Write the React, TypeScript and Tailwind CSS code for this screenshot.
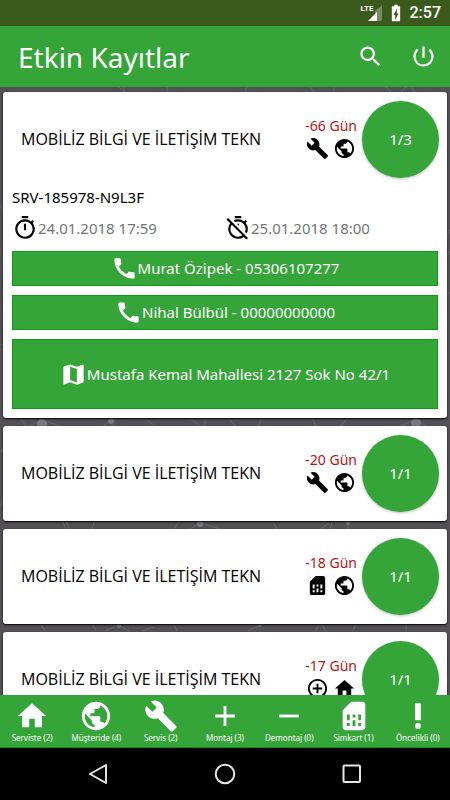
import React from 'react';
import type { IconType } from 'react-icons';
import {
  MdAdd,
  MdAddCircleOutline,
  MdBatteryChargingFull,
  MdBuild,
  MdCall,
  MdHome,
  MdMap,
  MdOutlineTimer,
  MdOutlineTimerOff,
  MdPowerSettingsNew,
  MdPriorityHigh,
  MdPublic,
  MdRemove,
  MdSearch,
  MdSimCard,
} from 'react-icons/md';

interface ServiceRecord {
  id: number;
  customer: string;
  days: string;
  count: string;
  icons: IconType[];
  details?: {
    code: string;
    start: string;
    end: string;
    contacts: { name: string; phone: string }[];
    address: string;
  };
}

const records: ServiceRecord[] = [
  {
    id: 1,
    customer: 'MOBİLİZ BİLGİ VE İLETİŞİM TEKN',
    days: '-66 Gün',
    count: '1/3',
    icons: [MdBuild, MdPublic],
    details: {
      code: 'SRV-185978-N9L3F',
      start: '24.01.2018 17:59',
      end: '25.01.2018 18:00',
      contacts: [
        { name: 'Murat Özipek', phone: '05306107277' },
        { name: 'Nihal Bülbül', phone: '00000000000' },
      ],
      address: 'Mustafa Kemal Mahallesi 2127 Sok No 42/1',
    },
  },
  { id: 2, customer: 'MOBİLİZ BİLGİ VE İLETİŞİM TEKN', days: '-20 Gün', count: '1/1', icons: [MdBuild, MdPublic] },
  { id: 3, customer: 'MOBİLİZ BİLGİ VE İLETİŞİM TEKN', days: '-18 Gün', count: '1/1', icons: [MdSimCard, MdPublic] },
  { id: 4, customer: 'MOBİLİZ BİLGİ VE İLETİŞİM TEKN', days: '-17 Gün', count: '1/1', icons: [MdAddCircleOutline, MdHome] },
];

const tabs: { label: string; icon: IconType }[] = [
  { label: 'Serviste (2)', icon: MdHome },
  { label: 'Müşteride (4)', icon: MdPublic },
  { label: 'Servis (2)', icon: MdBuild },
  { label: 'Montaj (3)', icon: MdAdd },
  { label: 'Demontaj (0)', icon: MdRemove },
  { label: 'Simkart (1)', icon: MdSimCard },
  { label: 'Öncelikli (0)', icon: MdPriorityHigh },
];

function StatusBar() {
  return (
    <div className="flex h-[26px] shrink-0 items-center justify-end bg-[#3a5a1c] pr-[9px] text-white">
      <div className="flex items-start">
        <span className="font-[Roboto,sans-serif] text-[8px] leading-2 font-bold">LTE</span>
        <svg className="-ml-2 h-4 w-4" viewBox="0 0 16 16" aria-hidden="true">
          <path d="M16 0v16H2l7-7V6z" fill="#fff" fillOpacity=".3" />
          <path d="M11 7v9H2z" fill="#fff" />
        </svg>
      </div>
      <MdBatteryChargingFull className="ml-1 h-5 w-5" />
      <span className="ml-1 font-[Roboto,sans-serif] text-[16px] leading-5 font-medium">2:57</span>
    </div>
  );
}

function Header() {
  return (
    <header className="flex h-[61px] shrink-0 items-center bg-[#36a539] pr-[13px] pl-[18px] text-white">
      <h1 className="flex-1 text-[28px] leading-9">Etkin Kayıtlar</h1>
      <button type="button" aria-label="Ara" className="mr-[26px]">
        <MdSearch className="h-[27px] w-[27px]" />
      </button>
      <button type="button" aria-label="Çıkış">
        <MdPowerSettingsNew className="h-[27px] w-[27px]" />
      </button>
    </header>
  );
}

// Faint network pattern behind the list
function Backdrop() {
  return (
    <svg
      className="absolute inset-0 h-full w-full"
      viewBox="0 0 450 608"
      preserveAspectRatio="none"
      fill="none"
      stroke="#69676c"
      strokeWidth="1"
      aria-hidden="true"
    >
      <path d="M118 0l6 4M124 5V0M167 0v8M244 8l3-8M310 0l4 5M334 0v5M386 0l5 5M400 6l6-6M412 0l3 6" />
      <path d="M0 118l5 7M450 164l-5 8M447 206h3M0 258h4M0 366l4-6M0 418l4-6M447 150l3-8" />
      <path d="M20 331l6 8M30 339l12-6 18 6M104 339l8-7 10-1M117 331l-6 8M145 331l10 8M190 331l10 8M205 331v8M236 339l-8-8M262 331l-4 8M312 331l4 8M340 339l8-8M400 339l14-6 12 6" />
      <path d="M62 433l4 9M66 433l3 9M95 433l-3 9M174 442l5-8M190 442l10-6 20 6M200 436l12-3M272 433l5 9M320 442l10-6M330 442l3-9M348 434v8" />
      <path d="M40 536l5 8M92 536l4 8M105 544l14-6 10 6M142 544l12-4M173 536l4 8M248 544l12-6M316 544l3-8M322 536l3 8M353 544l3-8M406 536v8" />
      <g fill="#7b797d" stroke="none">
        <circle cx="42" cy="337" r="5" />
        <circle cx="111" cy="334" r="3" />
        <circle cx="416" cy="336" r="5" />
        <circle cx="200" cy="437" r="3" />
        <circle cx="348" cy="436" r="2" />
        <circle cx="119" cy="539" r="2" />
        <circle cx="260" cy="538" r="2" />
      </g>
    </svg>
  );
}

function RecordCard({ record }: { record: ServiceRecord }) {
  const { details } = record;

  return (
    <article className="shrink-0 rounded-[3px] bg-white shadow-[0_1px_2px_#000]">
      <div className="flex h-[95px] items-center pr-2 pb-px pl-[18px]">
        <h2 className="min-w-0 flex-1 font-['Open_Sans',sans-serif] text-[16px] leading-6 whitespace-nowrap text-black">
          {record.customer}
        </h2>
        <div className="mr-[5px] flex flex-col items-center pb-1">
          <span className="text-[14px] leading-[22px] text-[#b81414]">{record.days}</span>
          <div className="flex gap-1 text-black">
            {record.icons.map((Icon, i) => (
              <Icon key={i} className="h-[23px] w-[23px]" />
            ))}
          </div>
        </div>
        <button
          type="button"
          className="h-[77px] w-[77px] rounded-full bg-[#36a539] text-[15px] text-white shadow-[0_1px_3px_#0004]"
        >
          {record.count}
        </button>
      </div>

      {details && (
        <div className="flex flex-col gap-[9px] px-[9px] pb-[9px]">
          <div>
            <p className="text-[15px] leading-5 text-black">{details.code}</p>
            <div className="mt-[7px] grid grid-cols-2 text-[15px] leading-7 text-[#757575]">
              <div className="flex items-center">
                <MdOutlineTimer className="h-[26px] w-[26px] text-black" />
                {details.start}
              </div>
              <div className="flex items-center">
                <MdOutlineTimerOff className="h-[26px] w-[26px] text-black" />
                {details.end}
              </div>
            </div>
          </div>
          {details.contacts.map((contact) => (
            <a
              key={contact.phone}
              href={`tel:${contact.phone}`}
              className="flex h-[35px] items-center justify-center border border-[#0a9d10] bg-[#36a539] text-[15px] text-white"
            >
              <MdCall className="h-[27px] w-[27px]" />
              {contact.name} - {contact.phone}
            </a>
          ))}
          <a
            href="#harita"
            className="flex h-[70px] items-center justify-center border border-[#0a9d10] bg-[#36a539] text-[15px] text-white"
          >
            <MdMap className="h-[27px] w-[27px]" />
            {details.address}
          </a>
        </div>
      )}
    </article>
  );
}

function TabBar() {
  return (
    <nav className="grid h-[53px] shrink-0 grid-cols-7 border-b border-[#188a1c] bg-[#36a539] text-white">
      {tabs.map(({ label, icon: Icon }) => (
        <button key={label} type="button" className="flex flex-col items-center pt-1">
          <Icon className="h-[34px] w-[34px]" />
          <span className="text-[8px] leading-[10px] whitespace-nowrap">{label}</span>
        </button>
      ))}
    </nav>
  );
}

function SystemBar() {
  return (
    <div className="flex h-[52px] shrink-0 items-center justify-center gap-[103px] bg-black text-[#e6e6e6]">
      <button type="button" aria-label="Geri">
        <svg className="h-6 w-6" viewBox="0 0 24 24" fill="none" stroke="currentColor" strokeWidth="2" strokeLinejoin="round">
          <path d="M20 3v18L4 12z" />
        </svg>
      </button>
      <button type="button" aria-label="Ana ekran">
        <svg className="h-6 w-6" viewBox="0 0 24 24" fill="none" stroke="currentColor" strokeWidth="2">
          <circle cx="12" cy="12" r="9.3" />
        </svg>
      </button>
      <button type="button" aria-label="Son uygulamalar">
        <svg className="h-6 w-6" viewBox="0 0 24 24" fill="none" stroke="currentColor" strokeWidth="2">
          <rect x="3.5" y="3.5" width="16.5" height="16.5" rx="1" />
        </svg>
      </button>
    </div>
  );
}

export default function App() {
  return (
    <div className="flex h-screen flex-col overflow-hidden font-['Noto_Sans',sans-serif]">
      <StatusBar />
      <Header />
      <main className="relative min-h-0 flex-1 overflow-hidden bg-[#535156]">
        <Backdrop />
        <div className="relative flex flex-col gap-2 px-[3px] pt-[5px]">
          {records.map((record) => (
            <RecordCard key={record.id} record={record} />
          ))}
        </div>
      </main>
      <TabBar />
      <SystemBar />
    </div>
  );
}
